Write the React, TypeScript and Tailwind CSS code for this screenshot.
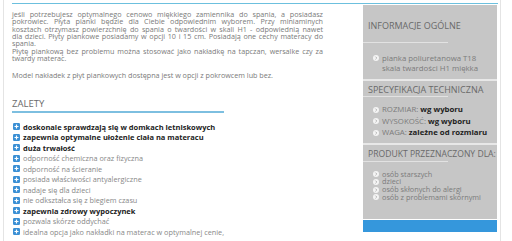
import React from 'react';

const zalety: { text: string; bold?: boolean }[] = [
  { text: 'doskonale sprawdzają się w domkach letniskowych', bold: true },
  { text: 'zapewnia optymalne ułożenie ciała na materacu', bold: true },
  { text: 'duża trwałość', bold: true },
  { text: 'odporność chemiczna oraz fizyczna' },
  { text: 'odporność na ścieranie' },
  { text: 'posiada właściwości antyalergiczne' },
  { text: 'nadaje się dla dzieci' },
  { text: 'nie odkształca się z biegiem czasu' },
  { text: 'zapewnia zdrowy wypoczynek', bold: true },
  { text: 'pozwala skórze oddychać' },
  { text: 'idealna opcja jako nakładki na materac w optymalnej cenie,' },
];

// lines as wrapped in the original block (full lines are justified)
const intro: { text: string; full?: boolean }[] = [
  { text: 'jeśli potrzebujesz optymalnego cenowo miękkiego zamiennika do spania, a posiadasz', full: true },
  { text: 'pokrowiec. Płyta pianki będzie dla Ciebie odpowiednim wyborem. Przy miniaminych', full: true },
  { text: 'kosztach otrzymasz powierzchnię do spania o twardości w skali H1 - odpowiednią nawet', full: true },
  { text: 'dla dzieci. Płyty piankowe posiadamy w opcji 10 i 15 cm. Posiadają one cechy materacy do', full: true },
  { text: 'spania.' },
  { text: 'Płytę piankową bez problemu można stosować jako nakładkę na tapczan, wersalke czy za', full: true },
  { text: 'twardy materac.' },
];

const PlusIcon = () => (
  <svg width="7" height="7" viewBox="0 0 7 7" className="shrink-0">
    <rect x="0" y="0" width="7" height="7" rx="1.2" fill="#3a8fd4" />
    <path d="M3.5 1.5v4M1.5 3.5h4" stroke="#fff" strokeWidth="1.2" />
  </svg>
);

const Bullet = () => (
  <svg width="6" height="6" viewBox="0 0 6 6" className="shrink-0">
    <circle cx="3" cy="3" r="3" fill="#f4f4f4" />
    <path d="M2.4 1.6 3.8 3 2.4 4.4" stroke="#b0b0b0" strokeWidth="0.9" fill="none" />
  </svg>
);

const SideItem = ({ children, lh }: { children: React.ReactNode; lh: string }) => (
  <li className={`flex items-center gap-[3px] pl-[10px] ${lh}`}>
    <Bullet />
    <span className="whitespace-nowrap">{children}</span>
  </li>
);

export default function App() {
  return (
    <div className="w-[512px] h-[241px] overflow-hidden bg-white font-['Open_Sans',sans-serif]">
      <div className="ml-[3px] w-[498px] h-full border-l border-r border-[#e4e4e4] pt-[3px]">
        <div className="ml-[8px] mr-[2px] border-t border-[#6cc0de] flex">
          {/* main column */}
          <div className="w-[351px] pt-[7px]">
            <div className="w-[311px] text-[7.2px] leading-[7.33px] text-[#7a7a7a]">
              <p>
                {intro.map((l) => (
                  <span
                    key={l.text}
                    className={l.full ? 'block whitespace-nowrap text-justify [text-align-last:justify]' : 'block'}
                  >
                    {l.text}
                  </span>
                ))}
              </p>
              <p className="mt-[9.5px]">Model nakładek z płyt piankowych dostępna jest w opcji z pokrowcem lub bez.</p>
            </div>

            <h2 className="mt-[19px] w-[212px] border-b-2 border-[#7dbfe0] pb-[1px] text-[9.5px] leading-[12px] text-[#6a6a6a]">
              ZALETY
            </h2>

            <ul className="mt-[8.5px] pl-[1px]">
              {zalety.map((z) => (
                <li key={z.text} className="flex items-center gap-[3px] h-[10.5px] leading-[10.5px]">
                  <PlusIcon />
                  <span
                    className={
                      z.bold
                        ? 'text-[7.5px] font-bold text-[#222] whitespace-nowrap'
                        : 'text-[7.3px] text-[#888] whitespace-nowrap'
                    }
                  >
                    {z.text}
                  </span>
                </li>
              ))}
            </ul>
          </div>

          {/* sidebar */}
          <div className="w-[134px] pt-[1px]">
            <div className="bg-[#c6c6c6] text-[7.8px] text-[#7b7b7b]">
              <section className="pt-[15px] pb-[6px]">
                <h3 className="px-[5px] text-[9px] leading-[12px] text-[#696969] whitespace-nowrap">
                  INFORMACJE OGÓLNE
                </h3>
                <div className="mt-[10px] w-[85px] h-px bg-[#e2e2e2]" />
                <ul className="mt-[10px]">
                  <SideItem lh="leading-[10px]">pianka poliuretanowa T18</SideItem>
                  <li className="pl-[19px] leading-[10px] whitespace-nowrap">skala twardości H1 miękka</li>
                </ul>
              </section>
              <div className="h-[2px] bg-[#e8e8e8]" />
              <section className="pt-[3px] pb-[4px]">
                <h3 className="px-[5px] text-[9px] leading-[12px] text-[#696969] whitespace-nowrap">
                  SPECYFIKACJA TECHNICZNA
                </h3>
                <div className="w-[85px] h-px bg-[#e2e2e2]" />
                <ul className="mt-[7px]">
                  <SideItem lh="leading-[11.5px]">
                    ROZMIAR: <b className="text-[#222]">wg wyboru</b>
                  </SideItem>
                  <SideItem lh="leading-[11.5px]">
                    WYSOKOŚĆ: <b className="text-[#222]">wg wyboru</b>
                  </SideItem>
                  <SideItem lh="leading-[11.5px]">
                    WAGA: <b className="text-[#222]">zależne od rozmiaru</b>
                  </SideItem>
                </ul>
              </section>
              <div className="h-[2px] bg-[#e8e8e8]" />
              <section className="pt-[3px] pb-[18px]">
                <h3 className="pl-[5px] text-[8.6px] leading-[12px] text-[#696969] whitespace-nowrap overflow-hidden">
                  PRODUKT PRZEZNACZONY DLA:
                </h3>
                <div className="mt-px w-[85px] h-px bg-[#e2e2e2]" />
                <ul className="mt-[9px] text-[7.3px]">
                  <SideItem lh="leading-[7.7px]">osób starszych</SideItem>
                  <SideItem lh="leading-[7.7px]">dzieci</SideItem>
                  <SideItem lh="leading-[7.7px]">osób skłonych do alergi</SideItem>
                  <SideItem lh="leading-[7.7px]">osób z problemami skórnymi</SideItem>
                </ul>
              </section>
            </div>
            <div className="mt-px h-[12px] bg-[#3597dc]" />
          </div>
        </div>
      </div>
    </div>
  );
}
